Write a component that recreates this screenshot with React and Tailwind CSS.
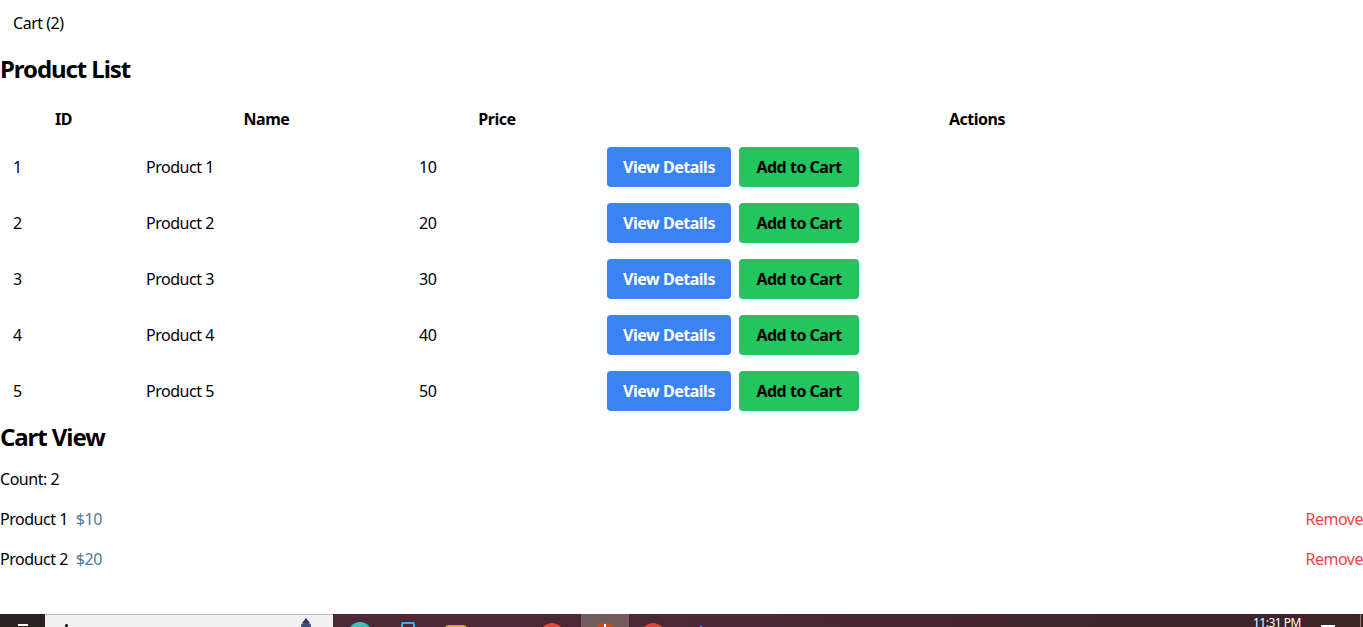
import React from "react";

const products = [
  { id: 1, name: "Product 1", price: 10 },
  { id: 2, name: "Product 2", price: 20 },
  { id: 3, name: "Product 3", price: 30 },
  { id: 4, name: "Product 4", price: 40 },
  { id: 5, name: "Product 5", price: 50 },
];

const cart = [
  { id: 1, name: "Product 1", price: 10 },
  { id: 2, name: "Product 2", price: 20 },
];

function Slot({ active, children }) {
  return (
    <div className={`flex h-10 w-12 justify-center pt-2 ${active ? "bg-[#745b5e]" : ""}`}>
      {children}
    </div>
  );
}

function Taskbar() {
  return (
    <div className="mt-auto h-[13px] overflow-hidden">
      <div className="flex h-10 bg-gradient-to-r from-[#4a2a34] via-[#4b2837] to-[#3d2426]">
        <div className="flex w-[45px] justify-center bg-[#2b2321] pt-[10px]">
          <div className="h-[2px] w-[10px] bg-white" />
        </div>
        <div className="flex w-[288px] items-start justify-between border-t border-[#bdbdbd] bg-[#f0f0f0] pl-5 pr-[22px] pt-[3px]">
          <div className="mt-[6px] h-[3px] w-[3px] rounded-full bg-black" />
          <div className="flex flex-col items-center">
            <div className="h-0 w-0 border-x-[4px] border-b-[5px] border-x-transparent border-b-[#2a3a5a]" />
            <div className="h-[6px] w-[10px] rounded-sm bg-[#3a4f78]" />
          </div>
        </div>
        <div className="flex flex-1 pl-[3px]">
          <Slot>
            <div className="h-6 w-6 rounded-full bg-gradient-to-b from-[#3ec6c6] to-[#2ea36a]" />
          </Slot>
          <Slot>
            <div className="h-5 w-[14px] rounded-[2px] border-2 border-[#3ab0f0]" />
          </Slot>
          <Slot>
            <div className="mt-[3px] h-4 w-[22px] rounded-sm bg-[#d9a640]" />
          </Slot>
          <Slot>
            <div className="mt-[5px] h-4 w-5 bg-[#6b87a8]" />
          </Slot>
          <Slot>
            <div className="mt-px h-6 w-6 rounded-full bg-[#e04a3a]" />
          </Slot>
          <div className="ml-[5px] flex h-10 w-12 justify-center bg-[#745b5e] pt-[9px]">
            <div className="flex h-6 w-6 justify-center rounded-full bg-[#d2461e] pt-px">
              <div className="h-[6px] w-[2px] bg-white" />
            </div>
          </div>
          <Slot>
            <div className="mt-px h-6 w-6 rounded-full bg-[#e0413a]" />
          </Slot>
          <Slot>
            <div className="mt-[3px] h-0 w-0 border-x-[8px] border-b-[10px] border-x-transparent border-b-[#2f8fe0]" />
          </Slot>
          <div className="ml-auto flex items-start gap-5 pr-[25px] pt-[3px]">
            <div
              className="text-[12px] leading-none text-white"
              style={{ fontFamily: '"Noto Sans", sans-serif' }}
            >
              11:31 PM
            </div>
            <div className="mt-[8px] h-[3px] w-[14px] bg-white" />
          </div>
          <div className="mr-[2px] h-10 w-px bg-[#8a7a7a]" />
        </div>
      </div>
    </div>
  );
}

export default function App() {
  return (
    <div
      className="flex h-[627px] flex-col overflow-hidden bg-white text-base tracking-[-0.03em] text-black"
      style={{ fontFamily: '"Noto Sans", "Open Sans", sans-serif' }}
    >
      <nav className="pl-[13px] pt-[11px] leading-6">Cart ({cart.length})</nav>
      <h2 className="mt-[18px] text-2xl font-bold leading-8 tracking-[-0.045em]">Product List</h2>
      <table className="mt-[14px] w-full table-fixed">
        <colgroup>
          <col className="w-[133px]" />
          <col className="w-[273px]" />
          <col className="w-[188px]" />
          <col />
        </colgroup>
        <thead>
          <tr className="h-10">
            <th className="pl-[7px] pr-[13px] text-center font-bold">ID</th>
            <th className="pl-[7px] pr-[13px] text-center font-bold">Name</th>
            <th className="pl-[7px] pr-[13px] text-center font-bold">Price</th>
            <th className="pl-[10px] pr-[13px] text-center font-bold">Actions</th>
          </tr>
        </thead>
        <tbody>
          {products.map((p) => (
            <tr key={p.id} className="h-14">
              <td className="px-[13px] py-2">{p.id}</td>
              <td className="px-[13px] py-2">{p.name}</td>
              <td className="px-[13px] py-2">{p.price}</td>
              <td className="px-[13px] py-2">
                <div className="flex gap-2">
                  <button className="h-10 w-[124px] rounded bg-[#3b82f6] font-bold text-white">
                    View Details
                  </button>
                  <button className="h-10 w-[120px] rounded bg-[#22c55e] font-bold text-black">
                    Add to Cart
                  </button>
                </div>
              </td>
            </tr>
          ))}
        </tbody>
      </table>
      <h2 className="mt-[2px] text-2xl font-bold leading-8 tracking-[-0.045em]">Cart View</h2>
      <p className="mt-[6px] py-2 leading-6">Count: {cart.length}</p>
      <ul>
        {cart.map((c) => (
          <li key={c.id} className="flex items-center justify-between py-2 leading-6">
            <span>
              {c.name}
              <span className="ml-2 text-[#52779a]">${c.price}</span>
            </span>
            <button className="text-[#ef4444]">Remove</button>
          </li>
        ))}
      </ul>
      <Taskbar />
    </div>
  );
}
